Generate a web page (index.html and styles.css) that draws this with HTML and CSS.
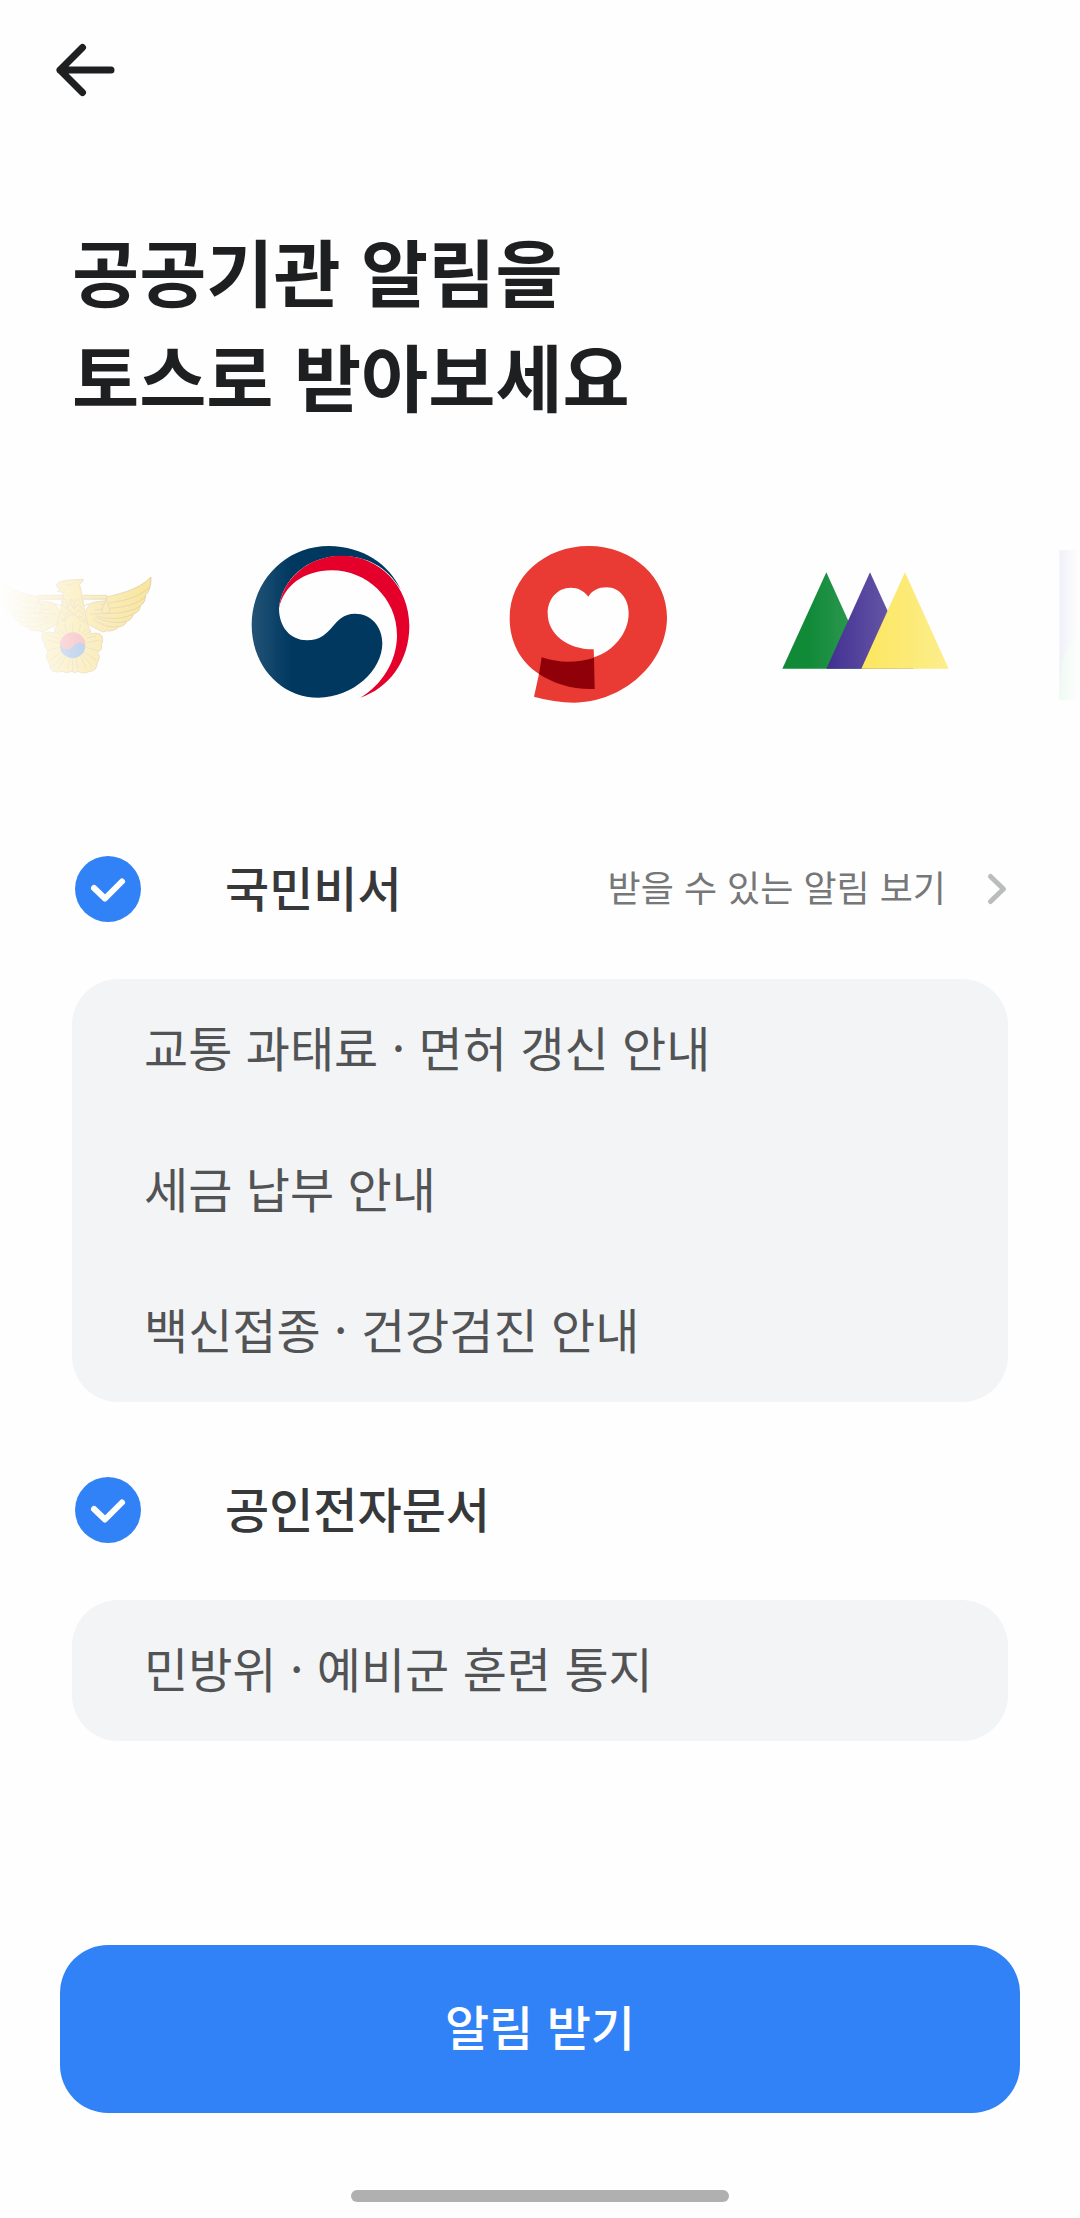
FILE: index.html
```html
<!DOCTYPE html>
<html lang="ko">
<head>
<meta charset="utf-8">
<meta name="viewport" content="width=device-width, initial-scale=1">
<title>공공기관 알림</title>
<link rel="stylesheet" href="styles.css">
</head>
<body>
<header class="topbar">
  <button class="back" type="button" aria-label="뒤로">
    <svg width="64" height="64" viewBox="0 0 64 64" fill="none" stroke="currentColor" stroke-width="7" stroke-linecap="round" stroke-linejoin="round"><path d="M28.500 9.500L6 32L28.500 54.500M6 32H57"/></svg>
  </button>
</header>
<main class="content">
  <h1 class="title">공공기관 알림을<br>토스로 받아보세요</h1>

  <div class="logos" aria-hidden="true">
    <svg class="logo logo-police" viewBox="0 0 660 570">
      <g fill="#f4cf3e" stroke="#c9a35c" stroke-width="3" stroke-linejoin="round">
        <path d="M453 141C410 185 350 192 300 206C270 216 256 232 256 260L262 282L308 306Q322 300 330 303Q350 300 356 290Q374 290 380 274Q398 268 400 252Q420 246 420 228Q438 216 436 196Q454 180 453 141Z"/>
        <path d="M-18 141C25 185 85 192 132 206C164 216 180 232 180 260L172 282L128 306Q114 300 106 303Q86 300 80 290Q62 290 56 274Q38 268 36 252Q16 246 16 228Q-2 216 0 196Q-18 180 -18 141Z"/>
        <path fill="none" d="M447 172C400 216 350 212 300 224M438 198C400 236 340 232 284 240M422 228C380 254 330 250 270 252M402 252C360 270 320 268 290 258M380 274C350 282 320 276 286 262M356 290C330 294 300 284 280 266M-12 172C35 216 85 212 135 224M-2 198C35 236 95 232 151 240M14 228C56 254 106 250 166 252M34 252C76 270 116 268 146 258M56 274C86 282 116 276 150 262M80 290C106 294 136 284 156 266"/>
        <path fill="#fff" d="M116 207H186V228Q150 214 116 212ZM249 207H318V212Q280 214 249 228Z"/>
        <path d="M112 196H320V207H112Z"/>
        <path d="M115 207L102 246Q115 254 128 246ZM318 207L304 246Q318 254 332 246Z"/>
        <path d="M170 163Q178 152 198 151L250 148Q248 158 238 163Q246 180 246 205L264 284L218 320L170 284L190 205L188 186Q176 186 172 184Q178 180 182 176Q170 176 170 163Z"/>
        <path fill="none" d="M198 164Q210 168 218 160M192 207L202 218L212 207L222 218L232 207L242 218M188 224L200 236L212 222L222 236L234 222L248 236M184 242L198 254L210 240L222 254L236 240L252 254M178 262L194 272L208 258L222 272L238 258L258 272M202 218L200 236L210 240M222 218V236M212 222V207M198 254L194 272M222 254V272"/>
        <path d="M218 253Q234 256 240 272Q262 272 266 292Q276 304 270 312Q296 304 306 318Q312 330 304 344Q308 362 292 366Q304 382 292 398Q290 424 270 424Q250 434 234 424Q222 432 216 424Q200 432 186 424Q162 430 152 418Q152 404 146 396Q134 382 144 364Q132 352 132 338Q120 322 128 310Q146 302 166 310Q160 296 170 288Q178 270 196 272Q202 256 218 253Z"/>
        <path fill="none" d="M218 306V280M200 308L194 284M184 318L166 304M236 308L242 284M252 318L270 304M178 338L140 330M258 338L298 330M178 352L142 362M258 352L294 362M184 366L150 392M252 366L290 392M196 380L176 416M242 380L258 416M210 388L202 418M218 388V424M228 388L234 418M190 312L178 296M246 312L258 296M178 326L148 316M258 326L290 316M190 374L160 410M248 374L276 410"/>
      </g>
      <circle cx="218" cy="347" r="38" fill="#2b6fc0"/>
      <path d="M180 343A38 38 0 0 1 256 347C250 336 230 334 218 350C206 366 184 358 180 343Z" fill="#ea4f5c"/>
    </svg>
    <svg class="logo logo-wide" viewBox="-30 0 780 570">
      <path fill="#003860" d="M296 48C400 49 478 104 512 178C470 110 410 78 335 78C230 78 155 150 147 235C147 290 180 331 231 331C310 331 305 252 375 251C424 251 457 290 457 340C457 420 370 503 265 503C150 503 65 405 65 285C65 155 165 48 296 48Z"/>
      <path fill="#e4002b" d="M147 235C155 148 235 77 335 77C450 77 538 170 538 288C538 395 475 475 391 503C455 465 501 395 501 315C501 205 410 121 305 121C220 121 160 170 147 235Z"/>
    </svg>
    <svg class="logo logo-wide" viewBox="-30 0 780 570">
      <path fill="#e93a33" fill-rule="evenodd" d="M296 48C430 48 531 145 531 262C531 400 400 517 252 518Q192 517 132 500L147 432C90 395 59 335 59 264C59 140 165 48 296 48ZM295 200C283 183 265 173 242 173C202 173 173 208 173 249C173 315 235 359 311 358L312 382C370 364 416 310 416 250C416 205 388 172 350 172C325 172 306 182 295 200Z"/>
      <path fill="#8f0008" d="M155 382Q234 408 312 383L314 477C245 479 190 460 147 432Z"/>
    </svg>
    <svg class="logo logo-peaks" viewBox="-60 0 900 570">
      <path fill="#118a38" d="M199 127L330 416H67Z"/>
      <path fill="#38258c" d="M330 127L462 416H199Z"/>
      <path fill="#fbe242" d="M435 127L566 416H304Z"/>
    </svg>
    <svg class="logo logo-edge" viewBox="840 0 120 570">
      <path fill="#6f7cc8" d="M898 60H960V510H898Z"/>
      <path fill="#5fd98c" d="M960 290Q905 370 902 440L898 510H960Z"/>
    </svg>
  </div>

  <section class="group">
    <div class="group-head">
      <label class="choice">
        <span class="tick">
          <input class="tick-box" type="checkbox" checked>
          <svg class="tick-mark" viewBox="0 0 66 66" fill="none" stroke="#fff" stroke-width="6" stroke-linecap="round" stroke-linejoin="round"><path d="M19 32L30 42.500L47 25.500"/></svg>
        </span>
        <span class="choice-name">국민비서</span>
      </label>
      <a class="more" href="#">
        <span class="more-text">받을 수 있는 알림 보기</span>
        <svg width="24" height="36" viewBox="0 0 24 36" fill="none" stroke="#bbbcbd" stroke-width="5" stroke-linecap="round" stroke-linejoin="round"><path d="M6.500 5.500L19.500 18L6.500 30.500"/></svg>
      </a>
    </div>
    <ul class="card">
      <li class="card-row">교통 과태료 · 면허 갱신 안내</li>
      <li class="card-row">세금 납부 안내</li>
      <li class="card-row">백신접종 · 건강검진 안내</li>
    </ul>
  </section>

  <section class="group">
    <div class="group-head">
      <label class="choice">
        <span class="tick">
          <input class="tick-box" type="checkbox" checked>
          <svg class="tick-mark" viewBox="0 0 66 66" fill="none" stroke="#fff" stroke-width="6" stroke-linecap="round" stroke-linejoin="round"><path d="M19 32L30 42.500L47 25.500"/></svg>
        </span>
        <span class="choice-name">공인전자문서</span>
      </label>
    </div>
    <ul class="card">
      <li class="card-row">민방위 · 예비군 훈련 통지</li>
    </ul>
  </section>
</main>
<footer class="bottom">
  <button class="submit" type="button">알림 받기</button>
  <div class="home-bar"></div>
</footer>
</body>
</html>
```
FILE: styles.css
```css
* {
  box-sizing: border-box;
}

body {
  display: flex;
  flex-direction: column;
  min-height: 100vh;
  margin: 0;
  background: #fefefe;
  color: #1e1f21;
  font-family: "Noto Sans CJK KR", sans-serif;
}

.topbar {
  display: flex;
  align-items: center;
  height: 140px;
  padding: 0 54px;
}

.back {
  display: flex;
  padding: 0;
  border: 0;
  background: none;
  color: inherit;
}

.title {
  margin: 77px 72px 103px;
  font-size: 73px;
  font-weight: 700;
  line-height: 105px;
}

.logos {
  display: flex;
  overflow: hidden;
  margin-bottom: 61px;
  -webkit-mask-image: linear-gradient(to right, transparent, #000 27%, #000 75%, rgb(0 0 0 / 60%) 88%, transparent);
  mask-image: linear-gradient(to right, transparent, #000 27%, #000 75%, rgb(0 0 0 / 60%) 88%, transparent);
}

.logo {
  flex: none;
  height: 190px;
}

.logo-police {
  width: 220px;
}

.logo-wide {
  width: 260px;
}

.logo-peaks {
  width: 300px;
}

.logo-edge {
  width: 40px;
}

.group {
  padding: 18px 72px 0;
}

.group-head {
  display: flex;
  align-items: center;
  justify-content: space-between;
  height: 180px;
}

.choice {
  display: flex;
  align-items: center;
  gap: 84px;
  padding-left: 3px;
}

.tick {
  display: grid;
}

.tick-box,
.tick-mark {
  grid-area: 1 / 1;
  width: 66px;
  height: 66px;
  margin: 0;
}

.tick-box {
  appearance: none;
  border-radius: 50%;
  background: #d1d6db;
}

.tick-box:checked {
  background: #3182f6;
}

.tick-mark {
  pointer-events: none;
}

.choice-name {
  padding-bottom: 6px;
  color: #37383a;
  font-size: 48px;
  font-weight: 500;
  line-height: 72px;
}

.more {
  display: flex;
  align-items: center;
  gap: 38px;
  color: #767778;
  font-size: 36px;
  line-height: 56px;
  text-decoration: none;
}

.more-text {
  padding-bottom: 6px;
}

.card {
  margin: 0;
  padding: 0 72px;
  border-radius: 46px;
  background: #f2f4f6;
  list-style: none;
}

.card-row {
  padding-bottom: 6px;
  color: #525355;
  font-size: 48px;
  line-height: 135px;
}

.bottom {
  display: flex;
  flex-direction: column;
  align-items: center;
  gap: 77px;
  margin-top: auto;
  padding: 0 60px 16px;
}

.submit {
  width: 100%;
  height: 168px;
  padding: 0 0 8px;
  border: 0;
  border-radius: 48px;
  background: #3182f6;
  color: #fff;
  font: 500 48px "Noto Sans CJK KR", sans-serif;
}

.home-bar {
  width: 378px;
  height: 12px;
  border-radius: 6px;
  background: #b0b0b0;
}
```
